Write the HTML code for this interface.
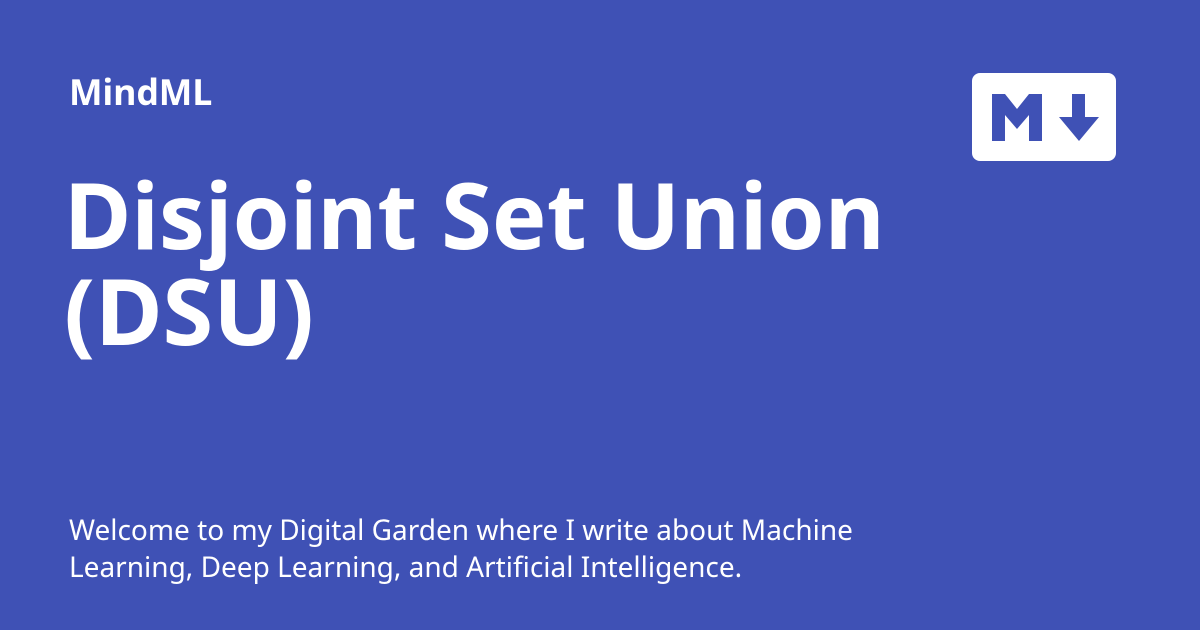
<!DOCTYPE html>
<html><head><style>
body{margin:0;width:1200px;height:630px;background:#3f51b5;overflow:hidden;font-family:"Noto Sans","Open Sans","DejaVu Sans","Liberation Sans",sans-serif;color:#fff;position:relative}
.brand{position:absolute;left:69px;top:70px;font-size:35.6px;font-weight:bold;line-height:44px}
.title{position:absolute;left:64px;top:166px;font-size:92px;font-weight:bold;line-height:96px;width:900px}
.desc{position:absolute;left:69px;top:512px;font-size:28px;line-height:37px}
svg{position:absolute;left:972px;top:73px}
</style></head><body>
<div class="brand">MindML</div>
<div class="title">Disjoint Set Union<br>(DSU)</div>
<div class="desc">Welcome to my Digital Garden where I write about Machine<br>Learning, Deep Learning, and Artificial Intelligence.</div>
<svg width="144" height="88" viewBox="0 0 144 88">
<rect width="144" height="88" rx="8" fill="#fff"/>
<path d="M20 68V21h13l12 15 12-15h13v47H57V42L45 56 33 42v26z" fill="#3f51b5"/>
<path d="M100 21h13v23h14l-20 24-20-24h13z" fill="#3f51b5"/>
</svg>
</body></html>
